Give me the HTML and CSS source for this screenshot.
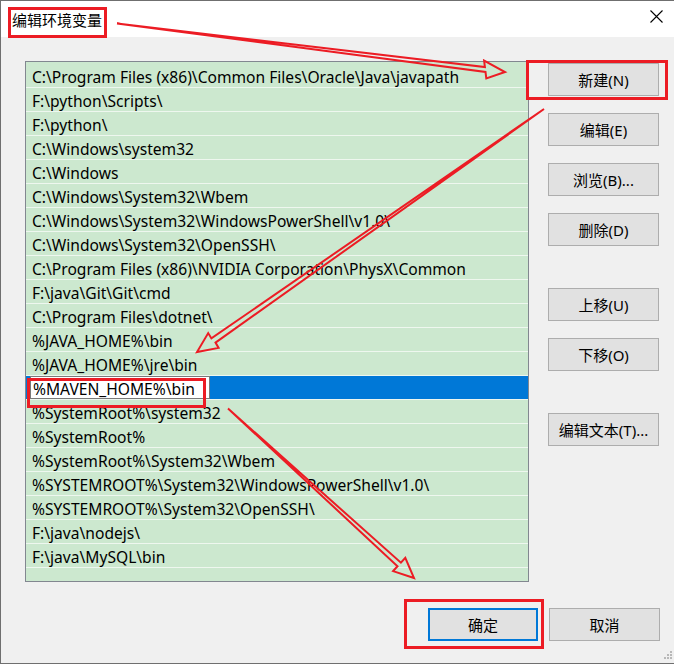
FILE: index.html
```html
<!DOCTYPE html>
<html lang="zh-CN">
<head>
<meta charset="utf-8">
<title>编辑环境变量</title>
<link rel="stylesheet" href="styles.css">
</head>
<body>
<div class="window">
  <div class="titlebar">
    <span class="title">编辑环境变量</span>
    <svg class="close" width="13" height="13" viewBox="0 0 13 13"><path d="M0.5 0.5L12.5 12.5M12.5 0.5L0.5 12.5" stroke="#000" stroke-width="1.1" fill="none"/></svg>
  </div>
  <div class="main">
    <div class="list">
      <div class="row">C:\Program Files (x86)\Common Files\Oracle\Java\javapath</div>
      <div class="row">F:\python\Scripts\</div>
      <div class="row">F:\python\</div>
      <div class="row">C:\Windows\system32</div>
      <div class="row">C:\Windows</div>
      <div class="row">C:\Windows\System32\Wbem</div>
      <div class="row">C:\Windows\System32\WindowsPowerShell\v1.0\</div>
      <div class="row">C:\Windows\System32\OpenSSH\</div>
      <div class="row">C:\Program Files (x86)\NVIDIA Corporation\PhysX\Common</div>
      <div class="row">F:\java\Git\Git\cmd</div>
      <div class="row">C:\Program Files\dotnet\</div>
      <div class="row">%JAVA_HOME%\bin</div>
      <div class="row">%JAVA_HOME%\jre\bin</div>
      <div class="row selected"><span class="editbox">%MAVEN_HOME%\bin</span></div>
      <div class="row">%SystemRoot%\system32</div>
      <div class="row">%SystemRoot%</div>
      <div class="row">%SystemRoot%\System32\Wbem</div>
      <div class="row">%SYSTEMROOT%\System32\WindowsPowerShell\v1.0\</div>
      <div class="row">%SYSTEMROOT%\System32\OpenSSH\</div>
      <div class="row">F:\java\nodejs\</div>
      <div class="row">F:\java\MySQL\bin</div>
      <div class="row"></div>
    </div>
    <div class="buttons">
      <button class="btn">新建(N)</button>
      <button class="btn">编辑(E)</button>
      <button class="btn">浏览(B)...</button>
      <button class="btn">删除(D)</button>
      <button class="btn group">上移(U)</button>
      <button class="btn">下移(O)</button>
      <button class="btn group">编辑文本(T)...</button>
    </div>
  </div>
  <div class="footer">
    <button class="btn ok">确定</button>
    <button class="btn">取消</button>
  </div>
  <svg class="grip" width="11" height="11" viewBox="0 0 11 11">
    <g fill="#b8b8b8">
      <rect x="8" y="0" width="2" height="2"/>
      <rect x="5" y="3" width="2" height="2"/><rect x="8" y="3" width="2" height="2"/>
      <rect x="2" y="6" width="2" height="2"/><rect x="5" y="6" width="2" height="2"/><rect x="8" y="6" width="2" height="2"/>
    </g>
  </svg>

  <div class="mark mark-title"></div>
  <div class="mark mark-new"></div>
  <div class="mark mark-edit"></div>
  <div class="mark mark-ok"></div>

  <svg class="arrows" width="674" height="664" viewBox="0 0 674 664">
    <g fill="none" stroke="#ec1c24" stroke-width="2" stroke-linejoin="miter">
      <polygon points="117,23.5 484.9,67.0 484.1,60.6 505,72 486.3,78.4 485.5,72.0"/>
      <polygon points="544,109 211.4,338.4 208.2,333.1 197,352 218.6,347.9 215.5,342.6"/>
      <polygon points="228,408.5 397.5,566.3 393.1,571.1 414,578 405.3,557.9 400.9,562.7"/>
    </g>
  </svg>
</div>
</body>
</html>
```
FILE: styles.css
```css
html, body {
  margin: 0;
  padding: 0;
  background: #ffffff;
}

body {
  font-family: "Noto Sans", "Noto Sans CJK SC", sans-serif;
  font-size: 15px;
  color: #000;
}

.window {
  position: relative;
  width: 674px;
  height: 664px;
  box-sizing: border-box;
  border-top: 1px solid #6f6f6f;
  border-left: 1px solid #6f6f6f;
  border-bottom: 1px solid #6f6f6f;
  background: #f0f0f0;
  overflow: hidden;
}

.titlebar {
  height: 36px;
  background: #ffffff;
  display: flex;
  align-items: center;
  justify-content: space-between;
  padding: 0 11px 0 11px;
}

.title {
  font-family: "Noto Sans CJK SC", sans-serif;
  font-size: 15px;
  line-height: 1;
  margin-top: 1px;
}

.close {
  display: block;
  margin-top: -6px;
}

.main {
  display: flex;
  align-items: flex-start;
  padding: 24px 0 0 24px;
}

.list {
  width: 504px;
  height: 521px;
  box-sizing: border-box;
  border: 1px solid #828790;
  background: #cce8cf;
  padding-top: 2px;
  overflow: hidden;
}

.row {
  box-sizing: border-box;
  height: 24px;
  padding-top: 3px;
  line-height: 20px;
  border-bottom: 1px solid #eef7ef;
  padding-left: 6px;
  white-space: nowrap;
  font-size: 15.6px;
}

.row.selected {
  background: #0078d7;
  padding: 0 0 0 4px;
  display: flex;
  align-items: center;
}

.editbox {
  display: block;
  box-sizing: border-box;
  width: 180px;
  height: 23px;
  line-height: 20px;
  padding-top: 2px;
  background: #ffffff;
  border: 1px solid #7a7a7a;
  padding-left: 2px;
  color: #000;
}

.buttons {
  display: flex;
  flex-direction: column;
  gap: 17px;
  margin-left: 19px;
  padding-top: 2px;
}

.btn {
  width: 111px;
  height: 33px;
  box-sizing: border-box;
  background: #e1e1e1;
  border: 1px solid #adadad;
  font-family: "Noto Sans", "Noto Sans CJK SC", sans-serif;
  font-size: 15px;
  color: #000;
  padding: 0;
  margin: 0;
}

.btn.group {
  margin-top: 25px;
}

.footer {
  display: flex;
  justify-content: flex-end;
  gap: 11px;
  padding: 26px 14px 0 0;
}

.btn.ok {
  width: 110px;
  border: 2px solid #0078d7;
}

.grip {
  position: absolute;
  right: 1px;
  bottom: 1px;
}

.mark {
  position: absolute;
  box-sizing: border-box;
  border: 3px solid #ec1c24;
}

.mark-title {
  left: 7px;
  top: 6px;
  width: 99px;
  height: 31px;
}

.mark-new {
  left: 525px;
  top: 59px;
  width: 142px;
  height: 40px;
}

.mark-edit {
  left: 26px;
  top: 377px;
  width: 179px;
  height: 30px;
}

.mark-ok {
  left: 403px;
  top: 598px;
  width: 140px;
  height: 50px;
}

.arrows {
  position: absolute;
  left: -1px;
  top: -1px;
  pointer-events: none;
}
```
